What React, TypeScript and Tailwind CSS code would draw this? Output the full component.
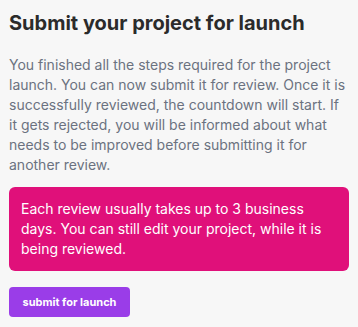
export default function App() {
  return (
    <div className="min-h-[327px] w-[358px] bg-[#f7f7f7] px-[9px] pt-[9px] font-['Inter',sans-serif]">
      <h1 className="text-[20px] font-bold leading-[28px] tracking-[0px] text-[#2b2b2b]">
        Submit your project for launch
      </h1>
      <p className="mt-[18px] text-[14px] leading-[20px] text-[#6b7280]">
        You finished all the steps required for the project launch. You can now submit it for review. Once it is
        successfully reviewed, the countdown will start. If it gets rejected, you will be informed about what needs to
        be improved before submitting it for another review.
      </p>
      <div className="mt-[12px] rounded-[6px] bg-[#e0107a] px-[12px] py-[12px] text-[14px] leading-[20px] text-white">
        Each review usually takes up to 3 business days. You can still edit your project, while it is being reviewed.
      </div>
      <button className="mt-[16px] h-[30px] w-[121px] rounded-[4px] bg-[#9a3de8] text-[11px] font-bold text-white">
        submit for launch
      </button>
    </div>
  );
}
